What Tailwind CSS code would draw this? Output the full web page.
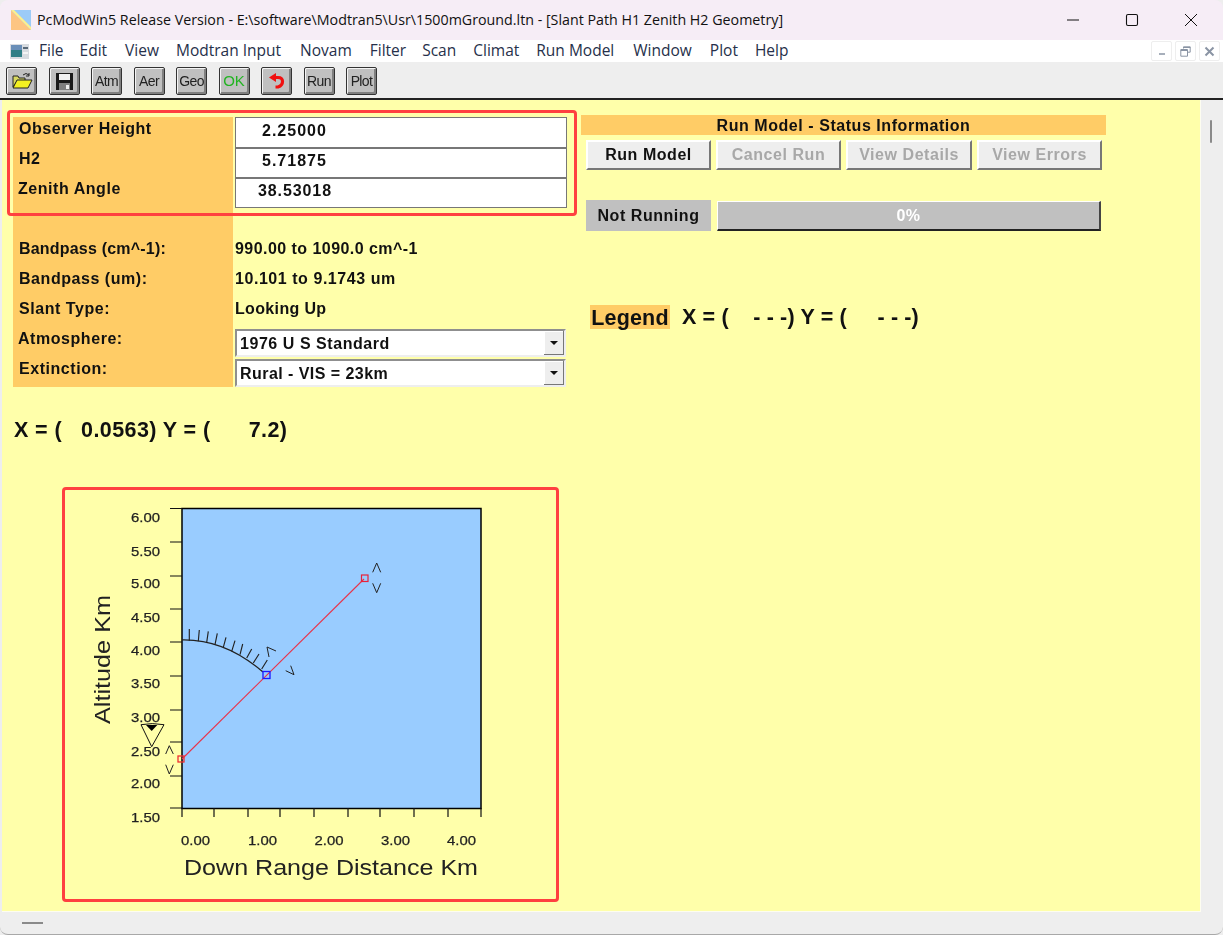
<!DOCTYPE html>
<html>
<head>
<meta charset="utf-8">
<script src="https://cdn.jsdelivr.net/npm/@tailwindcss/browser@4"></script>
</head>
<body class="bg-[#eeeeee] font-['Liberation_Sans',Arial,sans-serif] overflow-hidden">
<div class="relative w-[1223px] h-[935px] flex flex-col overflow-hidden rounded-[8px] border-b border-[#a8a8a8] bg-[#eeeeee] text-black">

  <!-- title bar -->
  <header class="h-[40px] shrink-0 flex items-center bg-[#f6edf6] pl-[11px] font-['Open_Sans',sans-serif] text-[14.25px] text-[#111]">
    <svg class="w-[20px] h-[20px] shrink-0" viewBox="0 0 20 20"><rect width="20" height="20" fill="#9ccbf7"/><polygon points="0,0 20,20 0,20" fill="#fdc583"/><polygon points="0,0 3,0 20,17 20,20" fill="#fdf08c"/></svg>
    <span class="ml-[6px] whitespace-nowrap">PcModWin5 Release Version - E:\software\Modtran5\Usr\1500mGround.ltn - [Slant Path H1 Zenith H2 Geometry]</span>
    <div class="ml-auto flex items-center h-full">
      <svg class="w-[14px] h-[14px] mr-[45px]" viewBox="0 0 14 14"><path d="M1 7h12" stroke="#111" stroke-width="1" fill="none"/></svg>
      <svg class="w-[14px] h-[14px] mr-[45px]" viewBox="0 0 14 14"><rect x="1.5" y="1.5" width="11" height="11" rx="1.5" stroke="#111" stroke-width="1.1" fill="none"/></svg>
      <svg class="w-[14px] h-[14px] mr-[25px]" viewBox="0 0 14 14"><path d="M1 1l12 12M13 1L1 13" stroke="#111" stroke-width="1" fill="none"/></svg>
    </div>
  </header>

  <!-- menu bar -->
  <nav class="h-[22px] shrink-0 flex items-center bg-white pl-[10px] font-['Open_Sans',sans-serif] text-[15.5px] text-[#26304a]">
    <svg class="w-[19px] h-[15px] mr-[10px] shrink-0" viewBox="0 0 19 15"><rect width="19" height="15" fill="#d8dce0"/><rect x="1" y="1" width="11" height="12" fill="#2f7f86"/><rect x="1" y="1" width="11" height="5" fill="#6a8fb8"/><rect x="13" y="3" width="5" height="2" fill="#5a6a78"/><rect x="13" y="8" width="5" height="2" fill="#f4f4f4"/></svg>
    <span class="mr-[16px]">File</span><span class="mr-[18px]">Edit</span><span class="mr-[17px]">View</span><span class="mr-[19px]">Modtran Input</span><span class="mr-[18px]">Novam</span><span class="mr-[16px]">Filter</span><span class="mr-[17px]">Scan</span><span class="mr-[17px]">Climat</span><span class="mr-[19px]">Run Model</span><span class="mr-[18px]">Window</span><span class="mr-[17px]">Plot</span><span>Help</span>
    <div class="ml-auto flex gap-[3px] pr-[3px]">
      <span class="w-[21px] h-[20px] bg-white border border-[#eeeeee] rounded-[2px] flex items-center justify-center"><svg class="w-[10px] h-[10px]" viewBox="0 0 10 10"><path d="M2 8h6" stroke="#8a94a4" stroke-width="1.6"/></svg></span>
      <span class="w-[21px] h-[20px] bg-white border border-[#eeeeee] rounded-[2px] flex items-center justify-center"><svg class="w-[11px] h-[11px]" viewBox="0 0 11 11"><path d="M3.5 2.5V.8h6.7v5.4H8M.8 3.5h6.7v6.7H.8z M.8 4.5h6.7M3.5 1.5h6.7" stroke="#8a94a4" stroke-width="1" fill="none"/></svg></span>
      <span class="w-[21px] h-[20px] bg-white border border-[#eeeeee] rounded-[2px] flex items-center justify-center"><svg class="w-[11px] h-[11px]" viewBox="0 0 11 11"><path d="M1.5 1.5l8 8M9.5 1.5l-8 8" stroke="#8a94a4" stroke-width="2"/></svg></span>
    </div>
  </nav>

  <!-- toolbar -->
  <div class="h-[38px] shrink-0 flex items-center gap-[11.5px] pl-[6px] pt-[2px] bg-[#eeeeee] border-b-2 border-[#222] text-[14px] text-[#222] tracking-[-0.6px] blur-[0.3px]">
    <button class="w-[31px] h-[28px] flex items-center justify-center rounded-[2px] border border-[#333] bg-[#c0c0c0] shadow-[inset_1px_1px_0_#f4f4f4,inset_-2px_-2px_0_#808080]">
      <svg class="w-[22px] h-[18px]" viewBox="0 0 22 18"><path d="M12 3q3-3 6 0" stroke="#222" fill="none"/><path d="M18 1v3h-3" stroke="#222" fill="none"/><path d="M2 4h5l1 2h6v3H6L2 15z" fill="#d8d860" stroke="#222"/><path d="M6 8h15l-4 8H2z" fill="#f4f020" stroke="#222"/></svg>
    </button>
    <button class="w-[31px] h-[28px] flex items-center justify-center rounded-[2px] border border-[#333] bg-[#c0c0c0] shadow-[inset_1px_1px_0_#f4f4f4,inset_-2px_-2px_0_#808080]">
      <svg class="w-[17px] h-[17px]" viewBox="0 0 17 17"><path d="M0 0h17v17H0z" fill="#1a1a1a"/><rect x="3" y="1" width="11" height="6" fill="#f0f0f0"/><rect x="3" y="10" width="11" height="7" fill="#808080"/><rect x="10" y="12" width="3" height="4" fill="#f0f0f0"/></svg>
    </button>
    <button class="w-[31px] h-[28px] flex items-center justify-center rounded-[2px] border border-[#333] bg-[#c0c0c0] shadow-[inset_1px_1px_0_#f4f4f4,inset_-2px_-2px_0_#808080]">Atm</button>
    <button class="w-[31px] h-[28px] flex items-center justify-center rounded-[2px] border border-[#333] bg-[#c0c0c0] shadow-[inset_1px_1px_0_#f4f4f4,inset_-2px_-2px_0_#808080]">Aer</button>
    <button class="w-[31px] h-[28px] flex items-center justify-center rounded-[2px] border border-[#333] bg-[#c0c0c0] shadow-[inset_1px_1px_0_#f4f4f4,inset_-2px_-2px_0_#808080]">Geo</button>
    <button class="w-[31px] h-[28px] flex items-center justify-center rounded-[2px] border border-[#333] bg-[#c0c0c0] shadow-[inset_1px_1px_0_#f4f4f4,inset_-2px_-2px_0_#808080] text-[#22b422] text-[15px] tracking-normal">OK</button>
    <button class="w-[31px] h-[28px] flex items-center justify-center rounded-[2px] border border-[#333] bg-[#c0c0c0] shadow-[inset_1px_1px_0_#f4f4f4,inset_-2px_-2px_0_#808080]">
      <svg class="w-[16px] h-[16px]" viewBox="0 0 16 16"><path d="M5 4.500h4q4.500 0 4.500 4T9 14H6.500" stroke="#f01010" stroke-width="3.200" fill="none"/><path d="M0 4.500L7 0v9z" fill="#f01010"/></svg>
    </button>
    <button class="w-[31px] h-[28px] flex items-center justify-center rounded-[2px] border border-[#333] bg-[#c0c0c0] shadow-[inset_1px_1px_0_#f4f4f4,inset_-2px_-2px_0_#808080]">Run</button>
    <button class="w-[31px] h-[28px] flex items-center justify-center rounded-[2px] border border-[#333] bg-[#c0c0c0] shadow-[inset_1px_1px_0_#f4f4f4,inset_-2px_-2px_0_#808080]">Plot</button>
  </div>

  <!-- body -->
  <div class="flex-1 flex min-h-0">
    <main class="relative ml-[2px] w-[1199px] bg-[#ffffaa] border-r border-b border-[#fdfdf0] flex blur-[0.3px]">
      <!-- left column -->
      <section class="w-[565px] ml-[11px] pt-[17px] shrink-0 flex flex-col text-[16px] font-bold tracking-[0.55px] text-[#111]">
        <div class="grid grid-cols-[220px_334px] bg-[linear-gradient(90deg,#ffcc66_220px,transparent_220px)] h-[270px] grid-rows-[31px_30px_30px_26px_30px_30px_30px_30px_33px]">
          <div class="pl-[6px]">Observer Height</div>
          <div class="ml-[2px] border border-[#777] bg-white pl-[26px] pt-[1px] tracking-[1px]">2.25000</div>
          <div class="pl-[6px] -mt-[1px]">H2</div>
          <div class="ml-[2px] border border-[#777] bg-white pl-[26px] tracking-[1px]">5.71875</div>
          <div class="pl-[5px] -mt-[1px]">Zenith Angle</div>
          <div class="ml-[2px] border border-[#777] bg-white pl-[22px] tracking-[0.9px]">38.53018</div>
          <div class="col-span-2"></div>
          <div class="pl-[6px] flex items-center tracking-[0.2px]">Bandpass (cm^-1):</div>
          <div class="pl-[2px] flex items-center tracking-[0.45px]">990.00 to 1090.0 cm^-1</div>
          <div class="pl-[6px] flex items-center">Bandpass (um):</div>
          <div class="pl-[2px] flex items-center">10.101 to 9.1743 um</div>
          <div class="pl-[6px] flex items-center">Slant Type:</div>
          <div class="pl-[2px] flex items-center tracking-[0.35px]">Looking Up</div>
          <div class="pl-[5px] flex items-center pb-[1px]">Atmosphere:</div>
          <div class="ml-[2px] mr-[1px] mt-[5px] mb-[-3px] flex items-center border-2 border-[#8f8f8f] border-r-[#eee] border-b-[#eee] bg-white pl-[3px]">
            <span class="flex-1 pt-[1px]">1976 U S Standard</span>
            <span class="w-[20px] h-full flex items-center justify-center bg-[#eeeeee] border-r border-b border-[#777] shadow-[inset_1px_1px_0_#fff]"><svg class="w-[8px] h-[4px]" viewBox="0 0 8 4"><path d="M0 0h8L4 4z" fill="#111"/></svg></span>
          </div>
          <div class="pl-[6px] pt-[3px]">Extinction:</div>
          <div class="ml-[2px] mr-[1px] mt-[5px] flex items-center border-2 border-[#8f8f8f] border-r-[#eee] border-b-[#eee] bg-white pl-[3px]">
            <span class="flex-1 pt-[1px] tracking-[0.45px]">Rural - VIS = 23km</span>
            <span class="w-[20px] h-full flex items-center justify-center bg-[#eeeeee] border-r border-b border-[#777] shadow-[inset_1px_1px_0_#fff]"><svg class="w-[8px] h-[4px]" viewBox="0 0 8 4"><path d="M0 0h8L4 4z" fill="#111"/></svg></span>
          </div>
        </div>
        <p class="mt-[30px] ml-[1px] h-[26px] leading-[26px] text-[21.5px] tracking-[0.4px] whitespace-pre">X = (   0.0563) Y = (      7.2)</p>

        <!-- chart -->
        <div class="mt-[44px] ml-[49px] w-[497px] h-[415px] border-[3px] border-[#ff4040] rounded-[4px] font-normal tracking-normal">
          <svg class="block w-[491px] h-[409px]" viewBox="65 491 491 409" font-family="'Liberation Sans',Arial,sans-serif" fill="#222">
            <rect x="182" y="509.500" width="299" height="300" fill="#99ccff" stroke="#000" stroke-width="1.500"/>
            <path d="M170 509.500h12M170 543h12M170 577h12M170 610h12M170 643h12M170 677h12M170 711h12M170 743h12M170 777h12M170 809h12M182 809v9M214 809v9M248 809v9M280 809v9M314 809v9M348 809v9M380 809v9M414 809v9M448 809v9M481 809v9" stroke="#111" stroke-width="1.200"/>
            <g font-size="13" stroke="#222" stroke-width="0.25">
              <text x="131" y="523" textLength="29" lengthAdjust="spacingAndGlyphs">6.00</text><text x="131" y="557" textLength="29" lengthAdjust="spacingAndGlyphs">5.50</text><text x="131" y="589" textLength="29" lengthAdjust="spacingAndGlyphs">5.00</text><text x="131" y="623" textLength="29" lengthAdjust="spacingAndGlyphs">4.50</text><text x="131" y="656" textLength="29" lengthAdjust="spacingAndGlyphs">4.00</text><text x="131" y="689" textLength="29" lengthAdjust="spacingAndGlyphs">3.50</text><text x="131" y="723" textLength="29" lengthAdjust="spacingAndGlyphs">3.00</text><text x="131" y="757" textLength="29" lengthAdjust="spacingAndGlyphs">2.50</text><text x="131" y="789" textLength="29" lengthAdjust="spacingAndGlyphs">2.00</text><text x="131" y="823" textLength="29" lengthAdjust="spacingAndGlyphs">1.50</text>
            </g>
            <g font-size="13" stroke="#222" stroke-width="0.25">
              <text x="181" y="846" textLength="29" lengthAdjust="spacingAndGlyphs">0.00</text><text x="248" y="846" textLength="29" lengthAdjust="spacingAndGlyphs">1.00</text><text x="314.500" y="846" textLength="29" lengthAdjust="spacingAndGlyphs">2.00</text><text x="381" y="846" textLength="29" lengthAdjust="spacingAndGlyphs">3.00</text><text x="447" y="846" textLength="29" lengthAdjust="spacingAndGlyphs">4.00</text>
            </g>
            <text x="184" y="876" font-size="21.500" textLength="294" lengthAdjust="spacingAndGlyphs">Down Range Distance Km</text>
            <text transform="translate(110 725) rotate(-90)" font-size="21.500" textLength="129" lengthAdjust="spacingAndGlyphs">Altitude Km</text>
            <path d="M182 640.800Q225 640 263 673" fill="none" stroke="#222" stroke-width="1.200"/>
            <path d="M189.300 641.700V630M198.300 642.300L199.300 631M206.700 643.300L208.300 632.300M215 645.700L217.300 634.300M223.300 648.300L226 638.300M231.700 652.300L235 641.700M240 655.700L242.700 645M246.700 659L251.700 650M253.300 664L259 655M261.700 670L267.300 661" stroke="#222" stroke-width="1.150" fill="none"/>
            <path d="M276 652L267 648L269 658M285.700 671.700L294 675.700L290.700 666.700" stroke="#222" fill="none"/>
            <path d="M182 760L364 580" stroke="#e8334a" stroke-width="1.100"/>
            <rect x="178" y="757" width="6" height="6" fill="none" stroke="#f03030" stroke-width="1.300"/>
            <rect x="263" y="672.500" width="7" height="7" fill="none" stroke="#1a1aff" stroke-width="1.300"/>
            <rect x="361.500" y="576" width="6.500" height="6.500" fill="none" stroke="#e8203a" stroke-width="1.200"/>
            <path d="M372.700 573.300L376.700 564L380.700 573.300M372.700 584.300L376.700 593.700L380.700 584.300M165.700 755L169.300 746.700L173.300 755M165.700 765.700L169.300 775L173.300 765.700" stroke="#222" fill="none"/>
            <path d="M141 725.700L151.700 747.700L164 725.700M141 725.700Q152 723.500 164 725.700" stroke="#111" stroke-width="1" fill="none"/>
            <path d="M146 726H157.300L151.700 732z" fill="#000"/>
          </svg>
        </div>
      </section>

      <!-- right column -->
      <section class="ml-[3px] pt-[15px] w-[525px] shrink-0 flex flex-col text-[16px] font-bold tracking-[0.55px] text-[#111]">
        <h2 class="h-[20px] leading-[21px] bg-[#ffcc66] text-center">Run Model - Status Information</h2>
        <div class="mt-[5px] ml-[5px] flex gap-[5px]">
          <button class="w-[125px] h-[30px] bg-[#eeeeee] font-bold border-t-2 border-l-2 border-t-white border-l-white border-b-2 border-r-2 border-b-[#777] border-r-[#777]">Run Model</button>
          <button class="w-[125px] h-[30px] bg-[#eeeeee] font-bold text-[#a8a8a8] border-t-2 border-l-2 border-t-white border-l-white border-b-2 border-r-2 border-b-[#777] border-r-[#777]">Cancel Run</button>
          <button class="w-[126px] h-[30px] bg-[#eeeeee] font-bold text-[#a8a8a8] border-t-2 border-l-2 border-t-white border-l-white border-b-2 border-r-2 border-b-[#777] border-r-[#777]">View Details</button>
          <button class="w-[125px] h-[30px] bg-[#eeeeee] font-bold text-[#a8a8a8] border-t-2 border-l-2 border-t-white border-l-white border-b-2 border-r-2 border-b-[#777] border-r-[#777]">View Errors</button>
        </div>
        <div class="mt-[30px] ml-[5px] flex gap-[6px]">
          <div class="w-[125px] h-[31px] bg-[#c0c0c0] flex items-center justify-center">Not Running</div>
          <div class="w-[384px] h-[30px] mt-[1px] bg-[#c0c0c0] border-b-2 border-r-2 border-b-[#222] border-r-[#444] border-t border-l border-t-white border-l-white text-white flex items-center justify-center">0%</div>
        </div>
        <div class="mt-[74px] ml-[9px] flex items-center h-[24px] text-[21.5px] tracking-[0.15px]">
          <span class="w-[80px] h-[24px] leading-[26px] bg-[#ffcc66] text-center">Legend</span>
          <span class="ml-[12px] whitespace-pre">X = (    - - -) Y = (     - - -)</span>
        </div>
      </section>

      <!-- annotation box over the form -->
      <div class="absolute left-[5px] top-[10px] w-[570px] h-[106px] border-[3px] border-[#ff4040] rounded-[4px] pointer-events-none"></div>
    </main>
    <aside class="flex-1 relative">
      <div class="absolute left-[9px] top-[20px] w-[2px] h-[23px] bg-[#8a8a8a] rounded-[1px]"></div>
    </aside>
  </div>

  <!-- status bar -->
  <footer class="h-[22px] shrink-0 flex items-center pl-[22px]">
    <span class="w-[21px] h-[2px] bg-[#8a8a8a]"></span>
  </footer>
</div>
</body>
</html>
